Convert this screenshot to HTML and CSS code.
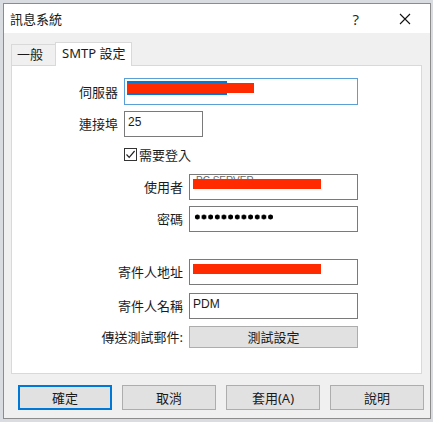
FILE: index.html
```html
<!DOCTYPE html>
<html lang="zh-Hant">
<head>
<meta charset="utf-8">
<title>訊息系統</title>
<link rel="stylesheet" href="styles.css">
</head>
<body>
<div class="dialog">
  <div class="titlebar">
    <span class="title">訊息系統</span>
    <span class="help">?</span>
    <svg class="close" width="12" height="12" viewBox="0 0 12 12"><path d="M1 1 L11 11 M11 1 L1 11" stroke="#111" stroke-width="1.1" fill="none"/></svg>
  </div>
  <div class="body">
    <div class="tabs">
      <div class="tab">一般</div>
      <div class="tab active">SMTP 設定</div>
    </div>
    <div class="panel">
      <div class="row r-server">
        <span class="lab lab-a">伺服器</span>
        <div class="field field-server focused">
          <span class="sel"></span>
          <span class="redact redact-server"></span>
        </div>
      </div>
      <div class="row r-port">
        <span class="lab lab-a">連接埠</span>
        <div class="field field-port">25</div>
      </div>
      <div class="row r-check">
        <span class="lab lab-a"></span>
        <span class="checkbox"><svg width="11" height="11" viewBox="0 0 11 11"><path d="M1.5 5.5 L4.2 8.3 L9.6 2" stroke="#222" stroke-width="1.2" fill="none"/></svg></span>
        <span class="check-label">需要登入</span>
      </div>
      <div class="row r-user">
        <span class="lab lab-b">使用者</span>
        <div class="field field-b"><span class="ghost">PC SERVER</span><span class="redact redact-b"></span></div>
      </div>
      <div class="row r-pass">
        <span class="lab lab-b">密碼</span>
        <div class="field field-b"><span class="dots"></span></div>
      </div>
      <div class="row r-addr">
        <span class="lab lab-b">寄件人地址</span>
        <div class="field field-b"><span class="redact redact-b"></span></div>
      </div>
      <div class="row r-name">
        <span class="lab lab-b">寄件人名稱</span>
        <div class="field field-b">PDM</div>
      </div>
      <div class="row r-test">
        <span class="lab lab-b">傳送測試郵件:</span>
        <button class="btn btn-test">測試設定</button>
      </div>
    </div>
    <div class="buttons">
      <button class="btn btn-main default">確定</button>
      <button class="btn btn-main">取消</button>
      <button class="btn btn-main">套用(A)</button>
      <button class="btn btn-main">說明</button>
    </div>
  </div>
</div>
</body>
</html>
```

FILE: styles.css
```css
* { box-sizing: border-box; }
html, body { margin: 0; padding: 0; }
body {
  width: 433px;
  height: 422px;
  overflow: hidden;
  background: #d9dde2;
  font-family: "Noto Sans", "Noto Sans CJK TC", sans-serif;
  font-size: 13px;
  color: #1a1a1a;
}
.dialog {
  margin: 3px 0 0 3px;
  width: 428px;
  height: 416px;
  border: 1px solid #8c8c8c;
  background: #f0f0f0;
  display: flex;
  flex-direction: column;
}
.titlebar {
  height: 29px;
  background: #fff;
  display: flex;
  align-items: center;
  padding-left: 6px;
  flex-shrink: 0;
}
.title { font-size: 13px; line-height: 16px; flex: 1; }
.help { font-size: 15px; line-height: 16px; margin-right: 40px; font-family: "Open Sans", sans-serif; color: #222; }
.close { margin-right: 19px; }
.body {
  padding: 9px 0 0 7px;
  flex: 1;
}
.tabs {
  display: flex;
  align-items: flex-end;
  height: 24px;
  position: relative;
  z-index: 1;
  margin-bottom: -1px;
}
.tab {
  height: 21px;
  width: 45px;
  border: 1px solid #d9d9d9;
  border-bottom: none;
  background: #f0f0f0;
  padding-left: 5px;
  line-height: 19px;
  margin-bottom: 1px;
  white-space: nowrap;
}
.tab.active {
  height: 24px;
  width: 77px;
  margin-left: -1px;
  margin-bottom: 0;
  background: #fff;
  padding-left: 6px;
  line-height: 21px;
}
.panel {
  width: 411px;
  height: 309px;
  background: #fff;
  border: 1px solid #d9d9d9;
  padding-top: 12px;
}
.row {
  display: flex;
  align-items: center;
  gap: 6px;
}
.lab { text-align: right; line-height: 16px; white-space: nowrap; }
.lab-a { width: 106px; }
.lab-b { width: 171px; }
.field {
  position: relative;
  height: 26px;
  border: 1px solid #7a7a7a;
  background: #fff;
  padding: 3px 0 0 3px;
  line-height: 14px;
  font-size: 12px;
  font-family: "Liberation Sans", sans-serif;
  overflow: hidden;
}
.field-server { width: 234px; height: 27px; }
.field.focused { border-color: #5a9fd6; }
.field-port { width: 79px; }
.field-b { width: 169px; }
.r-port { margin-top: 6px; }
.r-check { margin-top: 11px; gap: 0; height: 13px; }
.r-check .lab { margin-right: 6px; }
.checkbox {
  width: 13px;
  height: 13px;
  border: 1px solid #333;
  display: flex;
  align-items: center;
  justify-content: center;
  background: #fff;
}
.check-label { margin-left: 2px; line-height: 16px; }
.r-user { margin-top: 13px; }
.r-pass { margin-top: 6px; }
.r-addr { margin-top: 27px; }
.r-name { margin-top: 8px; }
.r-test { margin-top: 7px; }
.sel {
  position: absolute;
  left: 2px;
  top: 2px;
  width: 100px;
  height: 14px;
  background: #0078d7;
}
.redact {
  position: absolute;
  background: #ff2a00;
  height: 10px;
}
.redact-server { left: 2px; top: 4px; width: 127px; }
.redact-b { left: 3px; top: 4px; width: 128px; }
.ghost {
  position: absolute;
  left: 6px;
  top: 1px;
  font-size: 10px;
  color: #666;
  line-height: 10px;
}
.dots {
  display: block;
  margin-top: 4px;
  margin-left: 1px;
  width: 80px;
  height: 6px;
  background-image: radial-gradient(circle, #000 2.2px, transparent 2.8px);
  background-size: 6.67px 6px;
  background-repeat: repeat-x;
}
.btn {
  font-family: "Noto Sans", "Noto Sans CJK TC", sans-serif;
  font-size: 13px;
  color: #1a1a1a;
  background: #e1e1e1;
  border: 1px solid #adadad;
  padding: 0;
  line-height: 16px;
}
.btn-test { width: 169px; height: 22px; }
.buttons {
  display: flex;
  gap: 10px;
  margin-top: 11px;
  padding-left: 7px;
}
.btn-main { width: 94px; height: 25px; }
.btn-main.default {
  border: 1px solid #0078d7;
  box-shadow: inset 0 0 0 1px #0078d7;
}
```
